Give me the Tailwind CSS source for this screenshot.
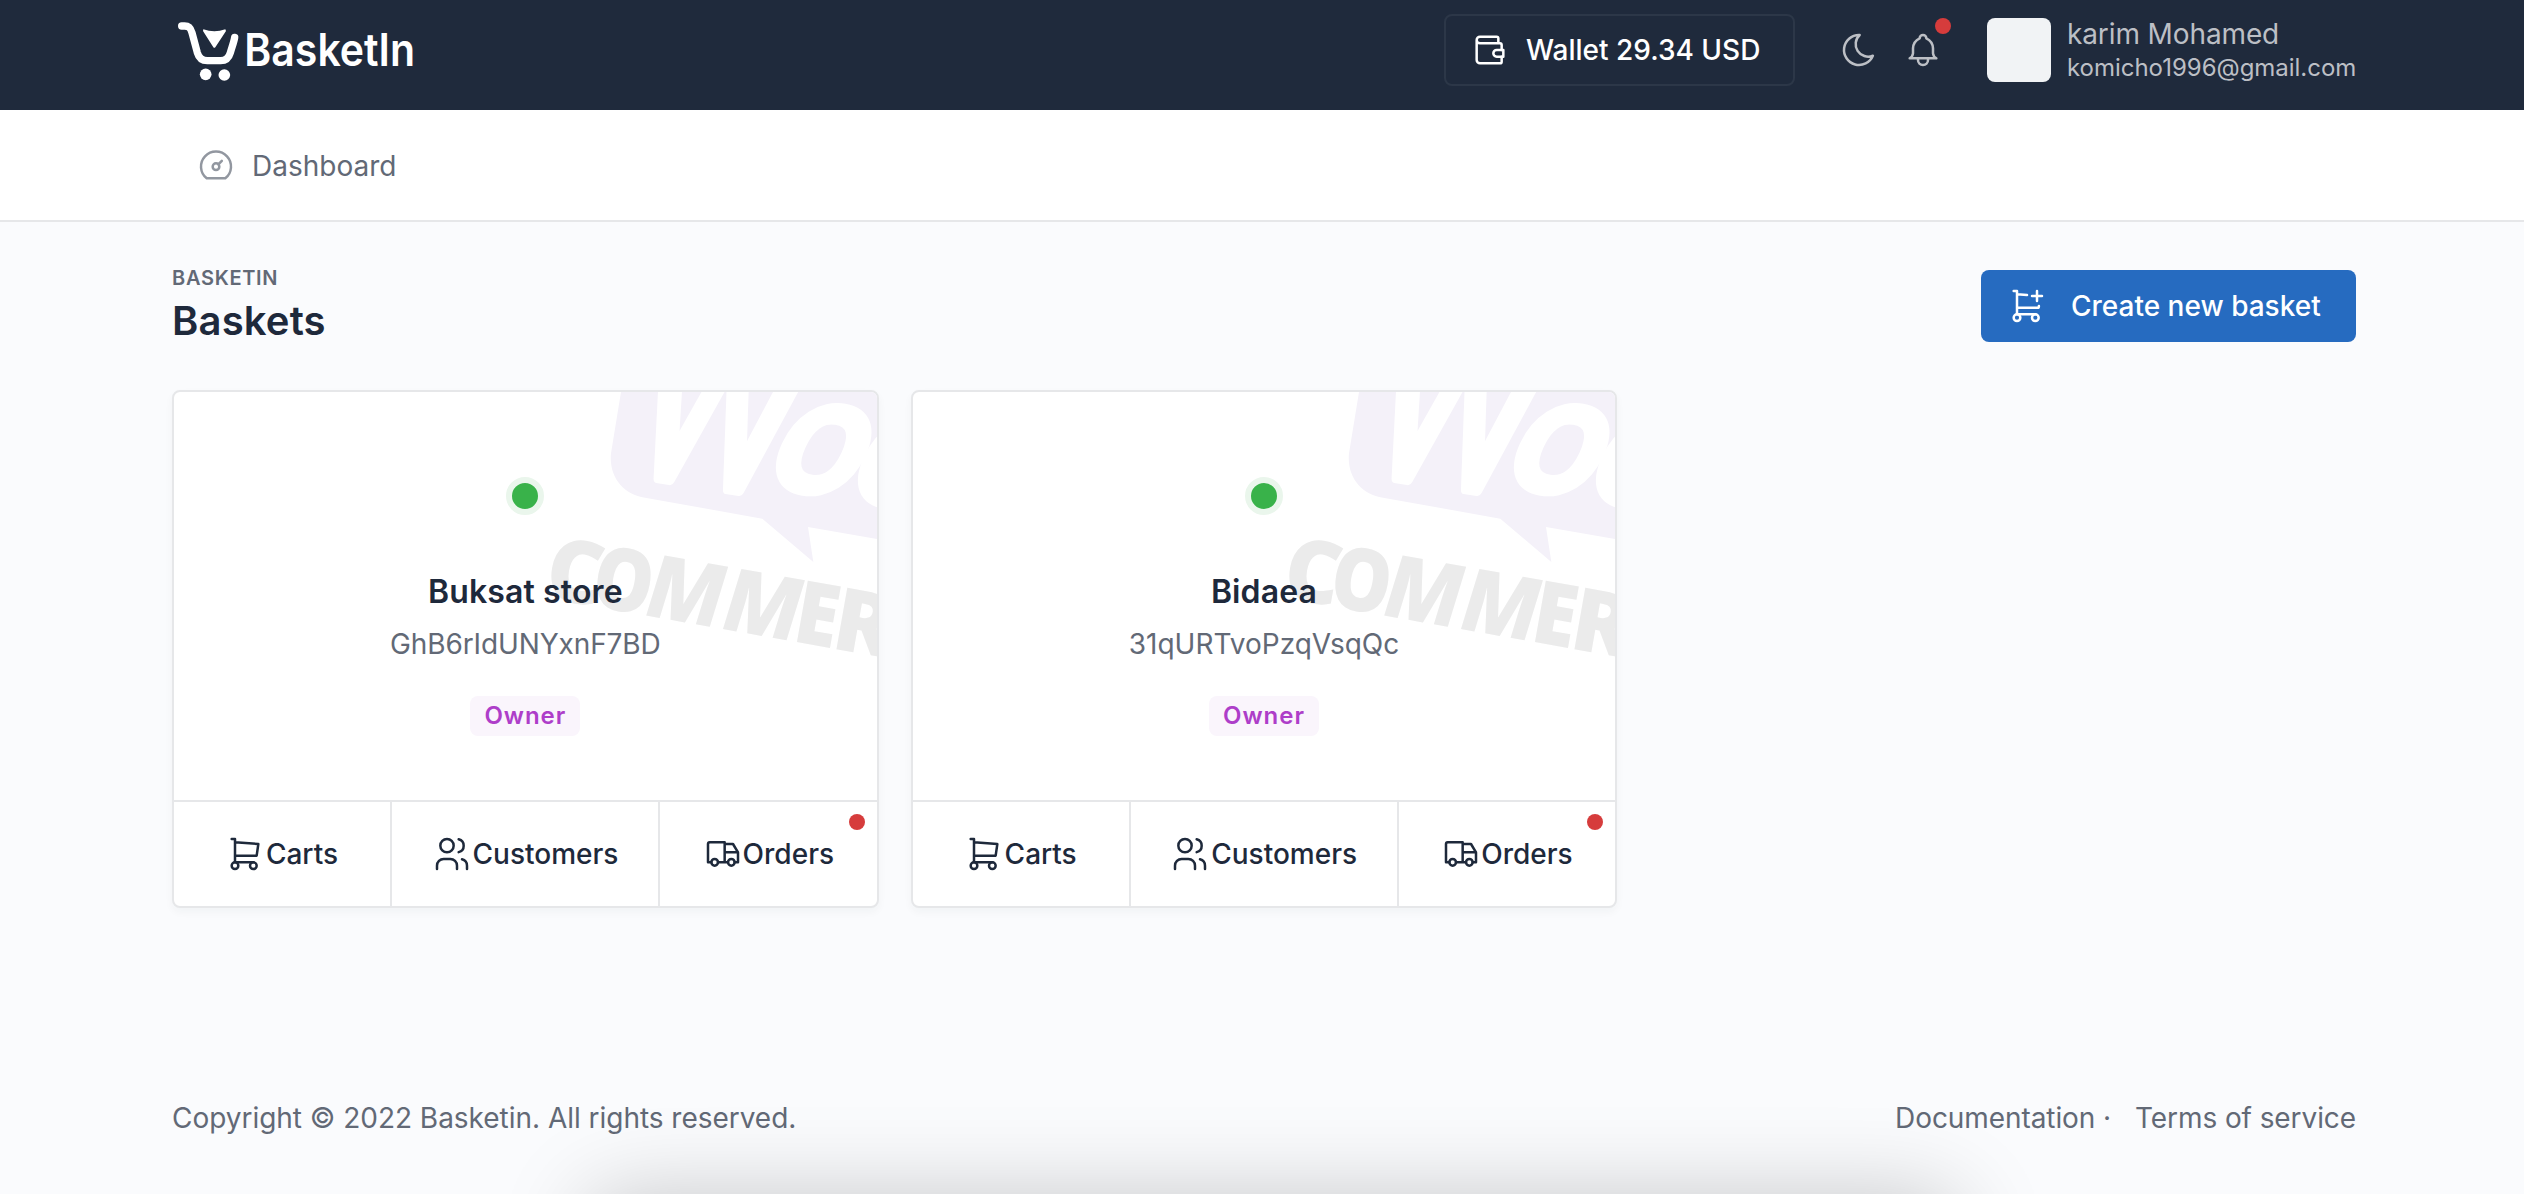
<!DOCTYPE html>
<html lang="en">
<head>
<meta charset="utf-8">
<title>Baskets</title>
<script src="https://cdn.jsdelivr.net/npm/@tailwindcss/browser@4"></script>
</head>
<body>
<div class="relative h-[1194px] overflow-hidden bg-[#fafbfd] font-['Inter',sans-serif] text-[28px] leading-10 text-[#1e293b]">

<svg class="hidden">
  <defs>
    <symbol id="cart" viewBox="0 0 24 24"><circle cx="6" cy="19" r="2"/><circle cx="17" cy="19" r="2"/><path d="M17 17H6V3H4M6 5l14 1-1 7H6"/></symbol>
    <symbol id="users" viewBox="0 0 24 24"><circle cx="9" cy="7" r="4"/><path d="M3 21v-2a4 4 0 0 1 4-4h4a4 4 0 0 1 4 4v2M16 3.13a4 4 0 0 1 0 7.75M21 21v-2a4 4 0 0 0-3-3.85"/></symbol>
    <symbol id="truck" viewBox="0 0 24 24"><circle cx="7" cy="17" r="2"/><circle cx="17" cy="17" r="2"/><path d="M5 17H3V6a1 1 0 0 1 1-1h9v12m-4 0h6m4 0h2v-6h-8m0-5h5l3 5"/></symbol>
    <symbol id="woo" viewBox="0 36 1071 810">
      <path fill="#f4f1f9" d="M303 36L273 220C266 290 310 343 375 353L727 416L880 546L864 441L1071 477V36Z"/>
      <g fill="#fff" stroke="#fff" stroke-linejoin="round" font-family="Lato" font-weight="400">
        <text transform="translate(308 276) rotate(9) skewX(-7)" font-size="610" stroke-width="34" textLength="464" lengthAdjust="spacingAndGlyphs">W</text>
        <text transform="translate(726 308) rotate(9) skewX(-16)" font-size="500" stroke-width="32" textLength="262" lengthAdjust="spacingAndGlyphs">o</text>
        <text transform="translate(972 348) rotate(9) skewX(-16)" font-size="500" stroke-width="32" textLength="262" lengthAdjust="spacingAndGlyphs">o</text>
      </g>
      <g fill="#ebebeb" transform="translate(85 655) rotate(10)" font-family="Open Sans" font-weight="800" font-size="262">
        <text x="-18" y="0" textLength="168" lengthAdjust="spacingAndGlyphs">C</text>
        <text x="124" y="0" textLength="180" lengthAdjust="spacingAndGlyphs">O</text>
        <text transform="translate(280 0) skewX(-7)" x="0" y="0" textLength="230" lengthAdjust="spacingAndGlyphs">M</text>
        <text transform="translate(514 0) skewX(-7)" x="0" y="0" textLength="230" lengthAdjust="spacingAndGlyphs">M</text>
        <text x="739" y="0" textLength="130" lengthAdjust="spacingAndGlyphs">E</text>
        <text x="857" y="0" textLength="180" lengthAdjust="spacingAndGlyphs">R</text>
      </g>
    </symbol>
  </defs>
</svg>

<header class="flex h-[110px] w-[2360px] items-start justify-between bg-[#1f2a3c] pl-[172px] shadow-[200px_0_0_#1f2a3c]">
  <svg class="ml-1 mt-5 h-[62px] w-[244px] overflow-visible" viewBox="48 60 732 186" role="img" aria-label="BasketIn">
    <path d="M65 78H74C87 78 92 84 96 98L112 158C117 175 126 182 142 182H182C199 182 207 172 211 158C217 138 222 125 224 112" fill="none" stroke="#fff" stroke-width="22" stroke-linecap="round" stroke-linejoin="round"/>
    <path d="M130 88Q163 100 196 88L198 93L166 142Q163 145 160 142L129 93Z" fill="#fff"/>
    <circle cx="137" cy="223" r="17.5" fill="#fff"/><circle cx="193" cy="225" r="17.5" fill="#fff"/>
    <text x="253" y="197" fill="#fff" font-family="Inter" font-weight="600" font-size="134" textLength="512" lengthAdjust="spacingAndGlyphs">BasketIn</text>
  </svg>
  <div class="flex">
    <a class="mt-[14px] flex h-[72px] w-[351px] items-center rounded-lg border-2 border-[#2c3748] pl-6 font-medium text-white">
      <svg class="mr-4 size-10 fill-none stroke-current stroke-[1.5]" viewBox="0 0 24 24" stroke-linecap="round" stroke-linejoin="round"><path d="M17 8V5a1 1 0 0 0-1-1H6a2 2 0 0 0 0 4h12a1 1 0 0 1 1 1v3m0 4v3a1 1 0 0 1-1 1H6a2 2 0 0 1-2-2V6"/><path d="M20 12v4h-4a2 2 0 0 1 0-4h4"/></svg>
      <span>Wallet 29.34 USD</span>
    </a>
    <div class="ml-[44px] mt-[30px] flex gap-6 text-[#bcbfc5]">
      <svg class="size-10 fill-none stroke-current stroke-[1.5]" viewBox="0 0 24 24" stroke-linecap="round" stroke-linejoin="round"><path d="M12 3c.132 0 .263 0 .393 0a7.5 7.5 0 0 0 7.92 12.446A9 9 0 1 1 12 2.992z"/></svg>
      <div class="relative size-10">
        <svg class="size-10 fill-none stroke-current stroke-[1.5]" viewBox="0 0 24 24" stroke-linecap="round" stroke-linejoin="round"><path d="M10 5a2 2 0 0 1 4 0a7 7 0 0 1 4 6v3a4 4 0 0 0 2 3H4a4 4 0 0 0 2-3v-3a7 7 0 0 1 4-6"/><path d="M9 17v1a3 3 0 0 0 6 0v-1"/></svg>
        <span class="absolute -top-3 left-8 size-4 rounded-full bg-[#d63c3c]"></span>
      </div>
    </div>
    <div class="ml-11 mt-[18px] size-16 rounded-lg bg-[#f1f3f5]"></div>
    <div class="ml-4 mt-[14px] w-[293px] whitespace-nowrap text-[#bcbfc5]">
      <div class="leading-10 tracking-[-.004em]">karim Mohamed</div>
      <div class="text-2xl leading-7 tracking-[-.001em]">komicho1996@gmail.com</div>
    </div>
  </div>
</header>

<nav class="flex h-28 items-center border-b-2 border-[#e6e7e9] bg-white pl-[196px] text-[#626976]">
  <svg class="mr-4 size-10 fill-none stroke-[#9297a0] stroke-[1.5]" viewBox="0 0 24 24" stroke-linecap="round" stroke-linejoin="round"><circle cx="12" cy="13" r="2"/><path d="M13.45 11.55l2.05-2.05M6.4 20a9 9 0 1 1 11.2 0z"/></svg>
  <span class="pt-0.5">Dashboard</span>
</nav>

<main class="pl-[172px] pt-[42px]">
  <div class="flex h-[78px] w-[2184px] items-end justify-between">
    <div class="-mt-0.5 self-start">
      <div class="text-xl font-semibold leading-8 tracking-[.035em] text-[#626976]">BASKETIN</div>
      <h1 class="text-[40px] font-semibold leading-[54px] tracking-[.004em]">Baskets</h1>
    </div>
    <button class="flex h-[72px] w-[375px] items-center rounded-lg bg-[#266bc0] pl-[26px] font-medium text-white">
      <svg class="mr-6 size-10 fill-none stroke-current stroke-[1.5]" viewBox="0 0 24 24" stroke-linecap="round" stroke-linejoin="round"><circle cx="6" cy="19" r="2"/><circle cx="17" cy="19" r="2"/><path d="M17 17H6V3H4M6 5l6.005.429M6 13h13l.143-1M15 6h6m-3-3v6"/></svg>
      <span>Create new basket</span>
    </button>
  </div>

  <div class="mt-12 grid w-[2184px] grid-cols-3 gap-8">
    <article class="relative flex h-[518px] flex-col overflow-hidden rounded-lg border-2 border-[#e6e7e9] bg-white shadow-[0_4px_8px_rgba(30,41,59,0.04)]">
      <svg class="absolute right-0 top-0 h-[270px] w-[357px]"><use href="#woo"/></svg>
      <div class="relative flex h-[408px] flex-col items-center pt-[85px]">
        <span class="size-[38px] rounded-full border-[6px] border-[#eaf6ec] bg-[#39b24a]"></span>
        <h2 class="mt-[53px] text-[32px] font-semibold leading-[48px] tracking-[.004em]">Buksat store</h2>
        <div class="mt-2 tracking-[-.004em] text-[#626976]">GhB6rIdUNYxnF7BD</div>
        <span class="mt-8 flex h-10 w-[110px] items-center justify-center rounded-lg bg-[#faf5fc] text-2xl font-semibold tracking-[.04em] text-[#ae3ec9]">Owner</span>
      </div>
      <div class="flex h-[106px] divide-x-2 divide-[#e6e7e9] border-t-2 border-[#e6e7e9] font-medium">
        <a class="flex w-[218px] items-center justify-center"><svg class="-ml-px mr-px size-10 fill-none stroke-current stroke-[1.5]" stroke-linecap="round" stroke-linejoin="round"><use href="#cart"/></svg>Carts</a>
        <a class="flex w-[268px] items-center justify-center pl-px"><svg class="-ml-px mr-px size-10 fill-none stroke-current stroke-[1.5]" stroke-linecap="round" stroke-linejoin="round"><use href="#users"/></svg>Customers</a>
        <a class="relative flex flex-1 items-center justify-center"><svg class="size-10 fill-none stroke-current stroke-[1.5]" stroke-linecap="round" stroke-linejoin="round"><use href="#truck"/></svg>Orders<span class="absolute right-3 top-3 size-4 rounded-full bg-[#d63c3c]"></span></a>
      </div>
    </article>

    <article class="relative flex h-[518px] flex-col overflow-hidden rounded-lg border-2 border-[#e6e7e9] bg-white shadow-[0_4px_8px_rgba(30,41,59,0.04)]">
      <svg class="absolute right-0 top-0 h-[270px] w-[357px]"><use href="#woo"/></svg>
      <div class="relative flex h-[408px] flex-col items-center pt-[85px]">
        <span class="size-[38px] rounded-full border-[6px] border-[#eaf6ec] bg-[#39b24a]"></span>
        <h2 class="mt-[53px] text-[32px] font-semibold leading-[48px] tracking-[.004em]">Bidaea</h2>
        <div class="mt-2 text-[#626976]">31qURTvoPzqVsqQc</div>
        <span class="mt-8 flex h-10 w-[110px] items-center justify-center rounded-lg bg-[#faf5fc] text-2xl font-semibold tracking-[.04em] text-[#ae3ec9]">Owner</span>
      </div>
      <div class="flex h-[106px] divide-x-2 divide-[#e6e7e9] border-t-2 border-[#e6e7e9] font-medium">
        <a class="flex w-[218px] items-center justify-center"><svg class="-ml-px mr-px size-10 fill-none stroke-current stroke-[1.5]" stroke-linecap="round" stroke-linejoin="round"><use href="#cart"/></svg>Carts</a>
        <a class="flex w-[268px] items-center justify-center pl-px"><svg class="-ml-px mr-px size-10 fill-none stroke-current stroke-[1.5]" stroke-linecap="round" stroke-linejoin="round"><use href="#users"/></svg>Customers</a>
        <a class="relative flex flex-1 items-center justify-center"><svg class="size-10 fill-none stroke-current stroke-[1.5]" stroke-linecap="round" stroke-linejoin="round"><use href="#truck"/></svg>Orders<span class="absolute right-3 top-3 size-4 rounded-full bg-[#d63c3c]"></span></a>
      </div>
    </article>
  </div>
</main>

<footer class="mt-[190px] flex w-[2356px] justify-between pl-[172px] text-[#626976]">
  <div class="tracking-[-.001em]">Copyright © 2022 Basketin. All rights reserved.</div>
  <div class="flex tracking-[-.003em]"><span>Documentation ·</span><span class="ml-6">Terms of service</span></div>
</footer>

<div class="pointer-events-none absolute inset-x-0 bottom-0 h-[120px] overflow-hidden">
  <div class="absolute left-[590px] top-full h-[300px] w-[1366px] rounded-[20px] shadow-[0_4px_90px_rgba(0,0,0,0.22)]"></div>
</div>
</div>
</body>
</html>
